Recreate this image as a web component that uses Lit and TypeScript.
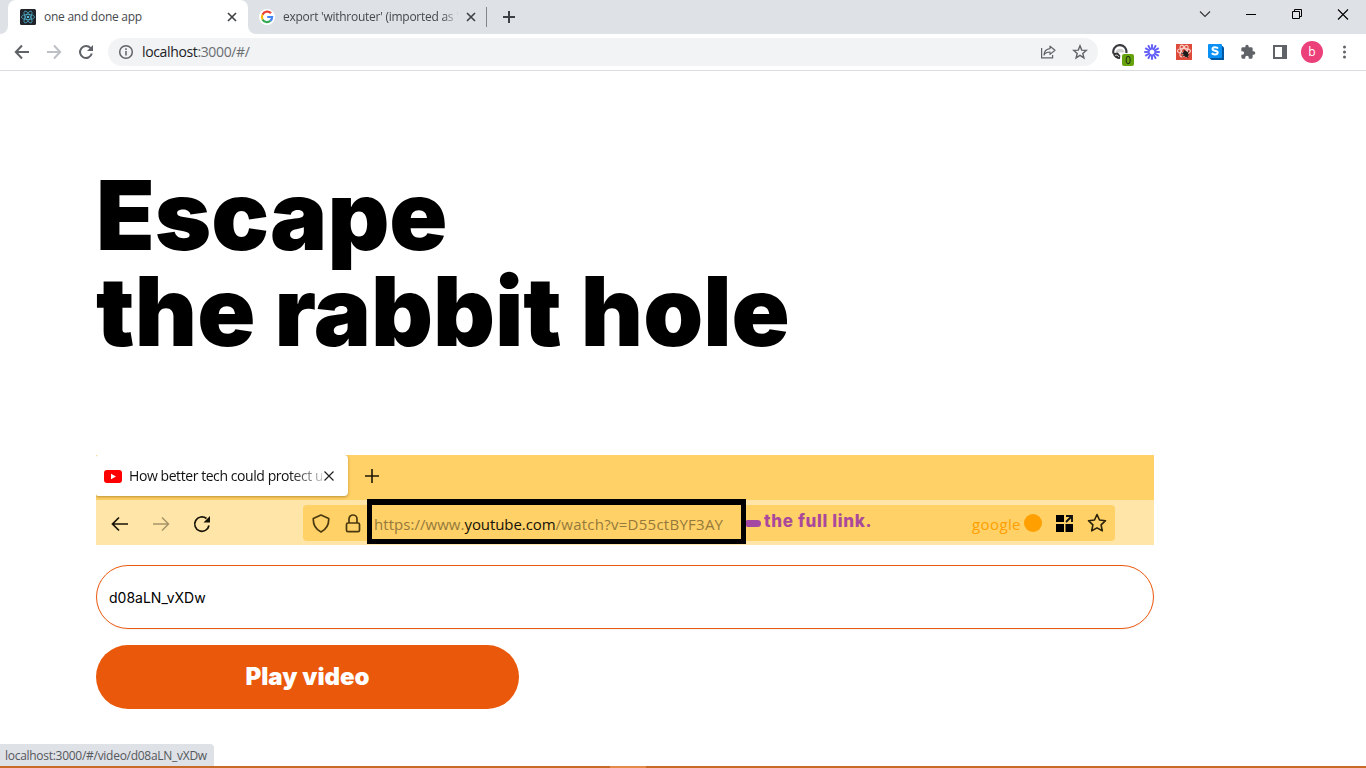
import { LitElement, html, css, svg } from "lit";
import { customElement } from "lit/decorators.js";

const closeIcon = html`<svg class="close" width="10" height="10" viewBox="0 0 10 10" fill="none" stroke="#3c4043" stroke-width="1.6"><path d="M1 1l8 8M9 1l-8 8" /></svg>`;

const rays = Array.from({ length: 12 }, (_, i) => svg`<path d="M8 5.6V.2" transform="rotate(${i * 30} 8 8)" />`);

@customElement("chrome-tabs")
class ChromeTabs extends LitElement {
  static styles = css`
    :host { display: flex; height: 34px; background: #dee1e6; font: 12px "Open Sans", "Noto Sans", sans-serif; color: #45494d; }
    svg { display: block; flex: none; }
    .lead { width: 8px; background: #fff; }
    .lead i { display: block; height: 34px; background: #dee1e6; border-bottom-right-radius: 8px; }
    .active { width: 240px; box-sizing: border-box; display: flex; align-items: center; padding: 0 11px 0 12px; background: #fff; border-radius: 8px 8px 0 0; }
    .title { flex: 1; margin-left: 8px; white-space: nowrap; overflow: hidden; line-height: 20px; letter-spacing: -0.26px; }
    .inactive { width: 238px; height: 34px; box-sizing: border-box; display: flex; align-items: center; padding: 0 11px 0 11px; background: #dee1e6; border-bottom-left-radius: 8px; }
    .under { background: #fff; }
    .title.fade { flex: none; width: 176px; margin-right: 7px; letter-spacing: -0.26px; -webkit-mask-image: linear-gradient(90deg, #000 160px, transparent); mask-image: linear-gradient(90deg, #000 160px, transparent); }
    .sep { width: 1px; height: 20px; background: #80868b; align-self: center; }
    .plus { margin: 11px 0 0 16px; }
    .win { margin-left: auto; display: flex; }
    .win svg { width: 46px; height: 28px; }
  `;
  render() {
    return html`
      <div class="lead"><i></i></div>
      <div class="active">
        <svg width="16" height="16" viewBox="0 0 16 16" fill="none" stroke="#53b9d4" stroke-width=".7">
          <rect width="16" height="16" rx="1.5" fill="#20232a" stroke="none" />
          <ellipse cx="8" cy="8" rx="6.6" ry="2.6" /><ellipse cx="8" cy="8" rx="6.6" ry="2.6" transform="rotate(60 8 8)" /><ellipse cx="8" cy="8" rx="6.6" ry="2.6" transform="rotate(120 8 8)" />
          <circle cx="8" cy="8" r="1.3" fill="#53b9d4" stroke="none" />
        </svg>
        <span class="title">one and done app</span>${closeIcon}
      </div>
      <div class="under"><div class="inactive">
        <svg width="16" height="16" viewBox="0 0 16 16">
          <circle cx="8" cy="8" r="8" fill="#fff" />
          <g fill="none" stroke-width="2.2"><path d="M12 4.3A5.1 5.1 0 0 0 3.5 5.7" stroke="#ea4335" /><path d="M3.5 5.7a5.1 5.1 0 0 0 0 4.7" stroke="#fbbc05" /><path d="M3.5 10.4a5.1 5.1 0 0 0 7.8 1.5" stroke="#34a853" /><path d="M11.3 11.9A5.1 5.1 0 0 0 13.1 8H8.2" stroke="#4285f4" /></g>
        </svg>
        <span class="title fade">export 'withrouter' (imported as 'w</span>${closeIcon}
      </div></div>
      <span class="sep"></span>
      <svg class="plus" width="12" height="12" viewBox="0 0 12 12" stroke="#3c4043" stroke-width="2"><path d="M6 0v12M0 6h12" /></svg>
      <div class="win">
        <svg viewBox="0 0 46 28" fill="none" stroke="#333" stroke-width="1.1"><path d="M18 11.5l5 5 5-5" /></svg>
        <svg viewBox="0 0 46 28" stroke="#000"><path d="M18 14.5h10" /></svg>
        <svg viewBox="0 0 46 28" fill="none" stroke="#000"><path d="M18.5 11.5h7v7h-7zM20.5 11.5v-2h7v7h-2" /></svg>
        <svg viewBox="0 0 46 28" fill="none" stroke="#000" stroke-width="1.1"><path d="M18 9.5l10 10M28 9.5l-10 10" /></svg>
      </div>`;
  }
}

@customElement("chrome-toolbar")
class ChromeToolbar extends LitElement {
  static styles = css`
    :host { display: flex; align-items: center; height: 36px; background: #fff; border-bottom: 1px solid #dadce0; font: 14px "Open Sans", "Noto Sans", sans-serif; color: #6a6e73; }
    svg { display: block; flex: none; }
    .nav { display: flex; gap: 16px; padding-left: 14px; }
    .omni { width: 990px; height: 28px; box-sizing: border-box; margin-left: 14px; padding: 0 10px; border-radius: 14px; background: #f1f3f4; display: flex; align-items: center; }
    .url { margin-left: 8px; line-height: 20px; letter-spacing: -0.36px; flex: 1; }
    .host { color: #202124; }
    .omni .share { margin-right: 16px; }
    .ext { display: flex; align-items: center; gap: 16px; margin-left: 14px; }
    .track { position: relative; }
    .badge { position: absolute; left: 10px; top: 10px; width: 12px; height: 12px; border-radius: 2px; background: #66a30f; color: #111; font-size: 10px; line-height: 12px; text-align: center; }
    .avatar { width: 22px; height: 22px; border-radius: 50%; background: #ec407a; color: #fff; font-size: 12px; line-height: 21px; text-align: center; margin: 0 -3px; }
  `;
  render() {
    return html`
      <div class="nav">
        <svg width="16" height="16" viewBox="0 0 16 16" fill="none" stroke="#5f6368" stroke-width="2"><path d="M15 8H2.5M8 1.5L1.8 8 8 14.5" /></svg>
        <svg width="16" height="16" viewBox="0 0 16 16" fill="none" stroke="#bdc1c6" stroke-width="2"><path d="M1 8h12.5M8 1.5L14.2 8 8 14.5" /></svg>
        <svg width="16" height="16" viewBox="0 0 16 16" fill="none" stroke="#5f6368" stroke-width="2"><path d="M13.8 9.6A6 6 0 1 1 12.6 4.1" /><path d="M15 1v6H9z" fill="#5f6368" stroke="none" /></svg>
      </div>
      <div class="omni">
        <svg width="16" height="16" viewBox="0 0 16 16" fill="none" stroke="#5f6368" stroke-width="1.5"><circle cx="8" cy="8" r="6.3" /><path d="M8 7v4.5M8 4.3v1.6" /></svg>
        <span class="url"><span class="host">localhost</span>:3000/#/</span>
        <svg class="share" width="16" height="16" viewBox="0 0 16 16" fill="none" stroke="#5f6368" stroke-width="1.2"><path d="M1.6 4v9.800h11V11" /><path d="M10 2.200L15 6.300l-5 4.100V8C7.300 8 5.200 8.800 4 11c.2-3.600 2-6 6-6.400z" stroke-linejoin="round" /></svg>
        <svg width="16" height="16" viewBox="0 0 16 16" fill="none" stroke="#5f6368" stroke-width="1.4"><path d="M8 1.800l1.700 4.300 4.600.3-3.500 3 1.100 4.500L8 11.400l-3.900 2.500 1.100-4.500-3.500-3 4.600-.3z" /></svg>
      </div>
      <div class="ext">
        <div class="track">
          <svg width="16" height="16" viewBox="0 0 16 16"><path d="M1.500 9.500A6.600 6.600 0 1 1 14.300 9" fill="#fff" stroke="#3b3d42" stroke-width="2.200" /><path d="M3.500 8.500a4.600 4.600 0 0 1 9 0z" fill="#d0d0d0" /><path d="M.8 9.200l5-.8 2.500 3.200-.3 3.400A7.500 7.500 0 0 1 .8 9.200z" fill="#333" /><path d="M3 11.500c1.500-.8 3-.3 4 1.500" fill="none" stroke="#fff" stroke-width=".8" /></svg>
          <span class="badge">0</span>
        </div>
        <svg width="16" height="16" viewBox="0 0 16 16" fill="none" stroke="#625df5" stroke-width="1.9">${rays}</svg>
        <svg width="16" height="16" viewBox="0 0 16 16"><rect width="16" height="16" fill="#de4b3b" /><g fill="none" stroke="#f8d5cf" stroke-width="1.1"><ellipse cx="8" cy="7" rx="6.5" ry="2.5" /><ellipse cx="8" cy="7" rx="6.5" ry="2.5" transform="rotate(60 8 7)" /><ellipse cx="8" cy="7" rx="6.5" ry="2.5" transform="rotate(120 8 7)" /></g><ellipse cx="9.800" cy="10" rx="2.300" ry="3.300" fill="#1c1c1c" transform="rotate(-30 9.8 10)" /><path d="M5 9l8 2M6 12.500l7-5M8 6l4 8" stroke="#1c1c1c" stroke-width=".9" /></svg>
        <svg width="16" height="16" viewBox="0 0 16 16"><path d="M2 2h12.500L16 3.500V16H3.500L0 13z" fill="#0058a5" /><rect width="14" height="14" rx="1" fill="#0a91f5" /><path d="M10 4.500C9.400 3.600 8.200 3.300 7 3.300c-1.600 0-2.500.7-2.500 1.700 0 2.500 5.200 1 5.200 3.600 0 1.200-1.200 1.900-2.800 1.900-1.300 0-2.400-.4-3.100-1.400" fill="none" stroke="#fff" stroke-width="1.900" /></svg>
        <svg width="16" height="16" viewBox="0 0 24 24" fill="#5f6368"><path d="M20.500 11H19V7a2 2 0 0 0-2-2h-4V3.500a2.500 2.500 0 0 0-5 0V5H4a2 2 0 0 0-2 2v3.800h1.500a2.700 2.700 0 0 1 0 5.400H2V20a2 2 0 0 0 2 2h3.800v-1.500a2.700 2.700 0 0 1 5.400 0V22H17a2 2 0 0 0 2-2v-4h1.500a2.500 2.500 0 0 0 0-5z" /></svg>
        <svg width="16" height="16" viewBox="0 0 16 16"><path d="M1 1h14v14H1zM3 3v10h7V3z" fill="#5f6368" fill-rule="evenodd" /></svg>
        <div class="avatar">b</div>
        <svg width="16" height="16" viewBox="0 0 16 16" fill="#5f6368"><circle cx="8.500" cy="3" r="1.500" /><circle cx="8.500" cy="8" r="1.500" /><circle cx="8.500" cy="13" r="1.500" /></svg>
      </div>`;
  }
}

@customElement("link-banner")
class LinkBanner extends LitElement {
  static styles = css`
    :host { display: block; height: 90px; background: #ffd166; font-family: "Open Sans", "Noto Sans", sans-serif; overflow: hidden; }
    svg { display: block; flex: none; }
    .top { display: flex; height: 45px; }
    .tab { width: 252px; height: 41px; box-sizing: border-box; padding: 1px 14px 0 8px; background: #fff; border-radius: 2px 4px 4px 2px; box-shadow: 0 1px 3px rgba(120, 80, 0, .5); display: flex; align-items: center; font-size: 14px; color: #111; }
    .tab span { width: 193px; margin: 0 2px 0 7px; overflow: hidden; white-space: nowrap; line-height: 22px; letter-spacing: -0.43px; -webkit-mask-image: linear-gradient(90deg, #000 160px, transparent 204px); mask-image: linear-gradient(90deg, #000 160px, transparent 204px); }
    .plus { margin: 14px 0 0 17px; }
    .bar { display: flex; height: 45px; background: #ffe5a8; }
    .nav { width: 207px; display: flex; align-items: center; gap: 23px; box-sizing: border-box; padding: 3px 0 0 15px; }
    .field { display: flex; width: 812px; height: 36px; margin-top: 5px; border-radius: 4px; background: #ffd166; }
    .icons { width: 64px; box-sizing: border-box; display: flex; gap: 15px; padding: 9px 0 0 9px; }
    .link { width: 379px; height: 45px; margin-top: -6px; box-sizing: border-box; border: 5px solid #000; border-top-width: 6px; padding-left: 2px; background: #ffd166; color: #95793c; font-size: 15px; line-height: 38px; letter-spacing: 0.04px; white-space: nowrap; }
    .link b { font-weight: 500; color: #151208; letter-spacing: -0.08px; }
    .link .path { letter-spacing: 0.26px; }
    .dash { width: 15px; height: 7px; border-radius: 2px 5px 5px 2px; background: #a349a4; margin: 15px 3px 0 0; }
    .note { width: 208px; font: 800 17px/32px Inter, sans-serif; letter-spacing: 0.66px; color: #aa499b; white-space: nowrap; }
    .google { width: 52px; font-size: 15px; line-height: 39px; letter-spacing: 0.4px; color: #ff9f00; white-space: nowrap; }
    .dot { width: 18px; height: 18px; border-radius: 50%; background: #ff9f00; margin-top: 9px; }
    .grid { margin: 10px 14px 0 14px; }
    .star { margin-top: 8px; }
  `;
  render() {
    return html`
      <div class="top">
        <div class="tab">
          <svg width="18" height="13" viewBox="0 0 18 13"><rect width="18" height="13" rx="3" fill="#f00" /><path d="M7 3.700v5.600l5-2.800z" fill="#fff" /></svg>
          <span>How better tech could protect us</span>
          <svg width="10" height="10" viewBox="0 0 10 10" stroke="#222" stroke-width="1.200"><path d="M.5.5l9 9M9.500.5l-9 9" /></svg>
        </div>
        <svg class="plus" width="14" height="14" viewBox="0 0 14 14" stroke="#1f1808" stroke-width="1.600"><path d="M7 0v14M0 7h14" /></svg>
      </div>
      <div class="bar">
        <div class="nav">
          <svg width="18" height="16" viewBox="0 0 18 16" fill="none" stroke="#181307" stroke-width="1.700"><path d="M17 8H2M8 1.500L1.500 8 8 14.500" /></svg>
          <svg width="18" height="16" viewBox="0 0 18 16" fill="none" stroke="#a69468" stroke-width="1.500"><path d="M1 8h15M10 1.500L16.500 8 10 14.500" /></svg>
          <svg width="18" height="18" viewBox="0 0 18 18" fill="none" stroke="#181307" stroke-width="1.700"><path d="M16 10.500A7.200 7.200 0 1 1 13.500 3.500" /><path d="M17 1v6.500h-6.500z" fill="#181307" stroke="none" /></svg>
        </div>
        <div class="field">
          <div class="icons">
            <svg width="18" height="19" viewBox="0 0 18 19" fill="none" stroke="#4a3910" stroke-width="1.700" stroke-linejoin="round"><path d="M9 1L16.700 4.500C17 10 15 15 9 18 3 15 1 10 1.300 4.500z" /></svg>
            <svg width="16" height="19" viewBox="0 0 16 19" fill="none" stroke="#4a3910" stroke-width="1.700"><rect x="1.500" y="9" width="13" height="8.700" rx="1.500" /><path d="M4 9V5a4 4 0 0 1 8 0v4" /></svg>
          </div>
          <div class="link">https://www.<b>youtube.com</b><span class="path">/watch?v=D55ctBYF3AY</span></div>
          <i class="dash"></i>
          <span class="note">the full link.</span>
          <span class="google">google</span>
          <i class="dot"></i>
          <svg class="grid" width="17" height="17" viewBox="0 0 17 17"><path d="M0 0h8v7H0zM0 9h8v8H0zM9.500 9h7.500v8H9.500z" /><path d="M10 1h6v6M16 1l-6 6" fill="none" stroke="#111" stroke-width="1.900" /></svg>
          <svg class="star" width="20" height="20" viewBox="0 0 20 20" fill="none" stroke="#2c220a" stroke-width="1.600" stroke-linejoin="round"><path d="M10 1.500l2.500 5.500 6 .7-4.400 4.100 1.200 6L10 14.900l-5.300 2.900 1.200-6L1.500 7.700l6-.7z" /></svg>
        </div>
      </div>`;
  }
}

@customElement("app-root")
class AppRoot extends LitElement {
  static styles = css`
    :host { display: flex; flex-direction: column; position: relative; width: 1366px; height: 768px; background: #fff; overflow: hidden; font-family: Inter, sans-serif; color: #000; }
    main { flex: 1; box-sizing: border-box; padding: 96px 212px 0 96px; }
    h1 { margin: 0 0 96px; font-size: 96px; line-height: 96px; font-weight: 900; letter-spacing: 0; }
    .code { display: flex; align-items: center; box-sizing: border-box; height: 64px; margin: 20px 0 16px; padding: 0 12px; border: 1px solid #ea580c; border-radius: 32px; box-shadow: 0 1px 2px rgba(0, 0, 0, .05); font-size: 14px; }
    .play { width: 423px; height: 64px; display: block; border: 0; padding: 0; border-radius: 32px; background: #ea580c; color: #fff; font: 900 24px/64px Inter, sans-serif; letter-spacing: 0; }
    .status { position: absolute; left: 0; bottom: 2px; width: 214px; height: 22px; box-sizing: border-box; padding-left: 5px; border-top-right-radius: 4px; background: #dee1e6; color: #55585c; font: 12px/23px "Open Sans", "Noto Sans", sans-serif; letter-spacing: -0.28px; white-space: nowrap; }
    .task { display: flex; height: 2px; background: #c86b27; }
    .task i { width: 36px; margin-left: 610px; background: #e58b4a; }
  `;
  render() {
    return html`
      <chrome-tabs></chrome-tabs>
      <chrome-toolbar></chrome-toolbar>
      <main>
        <h1>Escape<br />the rabbit hole</h1>
        <link-banner></link-banner>
        <div class="code">d08aLN_vXDw</div>
        <button class="play">Play video</button>
      </main>
      <div class="status">localhost:3000/#/video/d08aLN_vXDw</div>
      <div class="task"><i></i></div>`;
  }
}
